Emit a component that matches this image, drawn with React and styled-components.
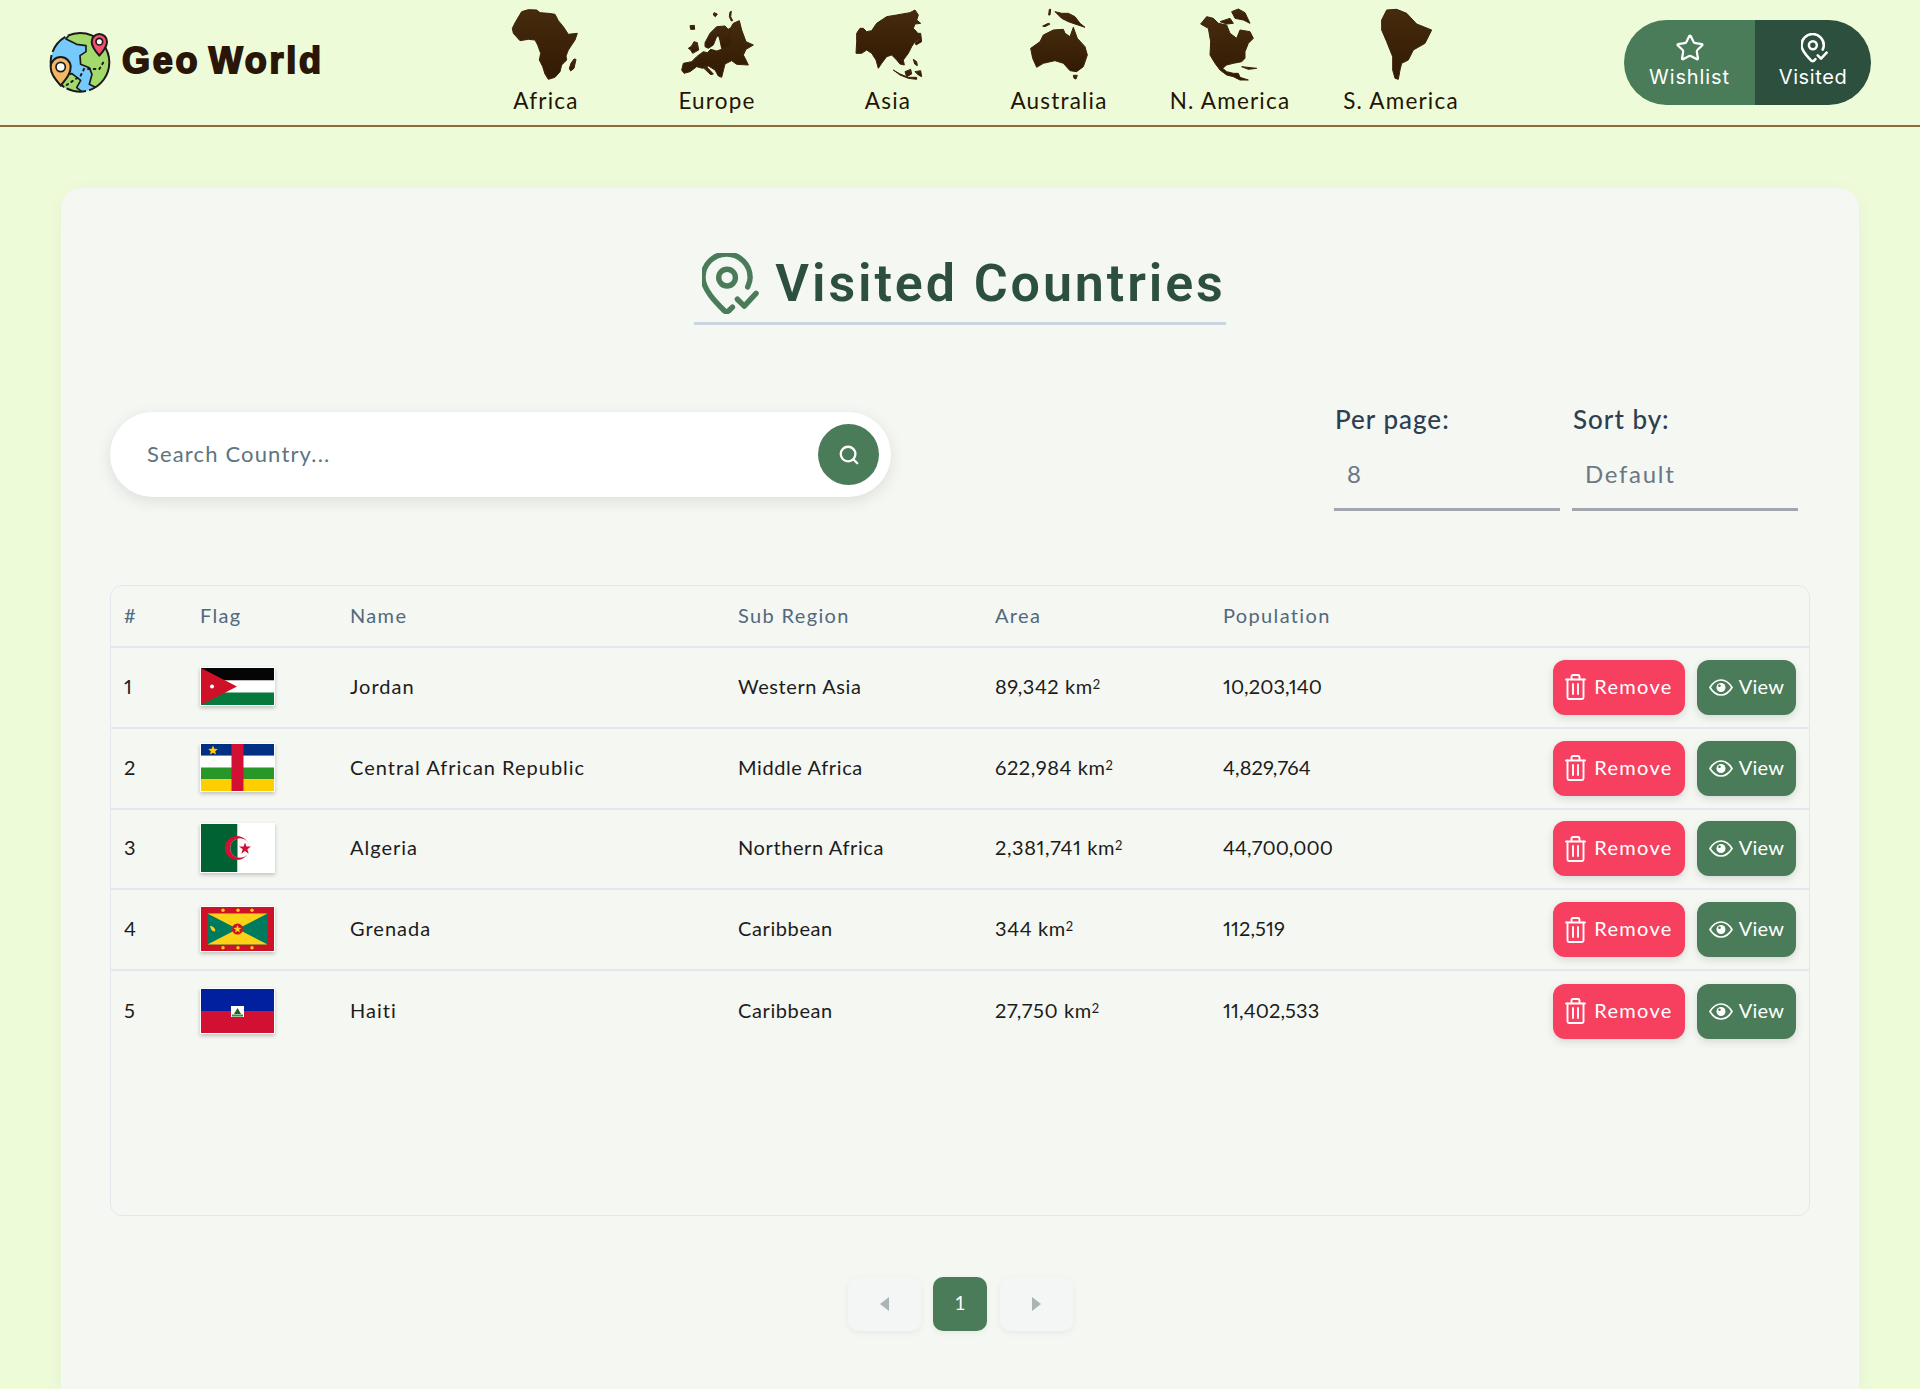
import React from "react";
import styled, { createGlobalStyle } from "styled-components";
import { Star, Search } from "lucide-react";

const Global = createGlobalStyle`
  html, body { margin: 0; padding: 0; height: 100%; overflow: hidden; background: #edfbd9; }
  * { box-sizing: border-box; }
  body { font-family: "Lato", "Noto Sans", sans-serif; color: #1c1c1c; }
`;

const Page = styled.div`height: 1389px; overflow: hidden; background: #edfbd9;`;

const Header = styled.header`
  display: flex; align-items: center; height: 127px; padding: 0 49px 0 40px;
  border-bottom: 2px solid #8c6b3c;
`;
const Brand = styled.a`display: flex; align-items: center; gap: 6px; width: 420.5px; flex: none;`;
const BrandName = styled.span`
  font: 700 36px/1 "Liberation Sans", Arial, sans-serif; color: #2a1608; padding-bottom: 4px;
  letter-spacing: 2.7px; word-spacing: -4px; -webkit-text-stroke: 1.8px #2a1608;
`;
const Nav = styled.nav`display: flex; align-self: flex-start;`;
const NavItem = styled.a`
  width: 171px; display: flex; flex-direction: column; align-items: center;
  font: 400 22.5px/26px "Lato", sans-serif; letter-spacing: 1.2px; color: #241404;
`;
const MapSvg = styled.svg`width: 90px; height: 90px; display: block; margin-bottom: -2px;`;
const Toggle = styled.div`
  margin-left: auto; display: flex; height: 85px; border-radius: 43px; overflow: hidden;
`;
const ToggleBtn = styled.button`
  width: ${p => p.$w}px; border: 0; padding: 12px 0 0; color: #fff;
  background: ${p => (p.$active ? "#2d4f3e" : "#4a7c59")};
  display: flex; flex-direction: column; align-items: center; gap: 1px;
  font: 400 20px/24px "Inter", sans-serif; letter-spacing: ${p => (p.$active ? ".6px" : ".9px")};
`;
const ToggleIcon = styled.span`height: 32px; display: flex; align-items: center; margin-left: ${p => p.$shift || 0}px;`;

const Card = styled.main`
  margin: 61px 61px 0; height: 1300px; padding: 49px; background: #f5f7f2;
  border-radius: 20px; box-shadow: 0 4px 20px rgba(0,0,0,.04);
`;
const TitleRow = styled.div`display: flex; justify-content: center;`;
const Title = styled.h1`
  margin: 0; display: flex; align-items: center; gap: 16px; padding: 16px 0 8px 8px;
  border-bottom: 3px solid #cbd5e1; color: #2d4f3e;
  font: 600 52px/61px "Roboto", sans-serif; letter-spacing: 2.9px;
`;
const Toolbar = styled.div`
  display: flex; justify-content: space-between; align-items: flex-start;
  margin-top: 78px; padding-right: 12px;
`;
const SearchBox = styled.div`
  margin-top: 9px; width: 781px; height: 85px; border-radius: 43px; background: #fff;
  display: flex; align-items: center; justify-content: space-between; padding: 0 12px 0 37px;
  box-shadow: 0 4px 15px rgba(0,0,0,.1);
`;
const Placeholder = styled.span`font: 400 22px/1 "Lato", sans-serif; letter-spacing: 1.15px; color: #5e7480; padding-bottom: 2px;`;
const SearchBtn = styled.button`
  width: 61px; height: 61px; border-radius: 50%; border: 0; padding: 0; background: #4a7c59; color: #fff;
  display: flex; align-items: center; justify-content: center;
`;
const Filters = styled.div`display: flex; gap: 12px;`;
const Filter = styled.div`width: 226px;`;
const FilterLabel = styled.div`
  font: 500 26px/33px "Lato", sans-serif; color: #2d3e50; letter-spacing: 1px; padding-left: 1px;
`;
const FilterValue = styled.div`
  height: 75px; padding: 21px 0 0 13px; border-bottom: 3px solid #a0a6ac;
  font: 400 24px/34px "Lato", sans-serif; color: #6b7785; letter-spacing: 1.7px;
`;
const TableWrap = styled.div`
  margin-top: 74px; height: 631px; border: 1.5px solid #e2e8f0; border-radius: 12px; overflow: hidden;
`;
const Table = styled.table`width: 100%; border-collapse: collapse; table-layout: fixed;`;
const Th = styled.th`
  height: 61px; padding: 0 0 3px 13px; width: ${p => p.$w || "auto"}; text-align: left;
  font: 400 20px/1 "Lato", sans-serif; letter-spacing: 1.35px; color: #52697d;
  border-bottom: 2px solid #e2e8f0;
`;
const Tr = styled.tr``;
const Td = styled.td`
  height: 80.8px; padding: 0 0 ${p => p.$pb ?? 3}px 13px; font: 400 20px/1 "Lato", sans-serif;
  font-variant-numeric: proportional-nums;
  letter-spacing: ${p => p.$ls ?? ".6px"}; color: #1c1c1c;
  border-bottom: 2px solid #e2e8f0;
  ${Tr}:last-child & { border-bottom: 0; }
`;
const Sup = styled.sup`font-size: 13px; line-height: 0; vertical-align: 5px;`;
const FlagFrame = styled.span`
  display: block; width: 75px; line-height: 0; box-shadow: 0 2px 4px rgba(0,0,0,.22); border: 1px solid #fff;
`;
const Actions = styled.div`display: flex; justify-content: flex-end; gap: 12px; padding-right: 13px;`;
const ActionBtn = styled.button`
  height: 55px; width: ${p => p.$w}px; border: 0; border-radius: 12px; padding: 0; color: #fff;
  background: ${p => p.$bg}; display: flex; align-items: center; justify-content: center; gap: ${p => p.$gap}px;
  font: 400 20px/1 "Lato", sans-serif; letter-spacing: ${p => p.$ls};
  box-shadow: 0 3px 8px rgba(0,0,0,.12);
`;
const ActionLabel = styled.span`padding-bottom: 3px;`;
const Pager = styled.div`display: flex; justify-content: center; gap: 12.5px; margin-top: 61px;`;
const PageBtn = styled.button`
  width: ${p => (p.$active ? 54 : 73)}px; height: 54px; border: 0; border-radius: 10px; padding: 0 0 ${p => (p.$active ? 3 : 0)}px;
  display: flex; align-items: center; justify-content: center;
  background: ${p => (p.$active ? "#4a7c59" : "#f4f6f6")}; color: #fff;
  font: 400 19px/1 "Lato", sans-serif;
  box-shadow: 0 2px 6px rgba(0,0,0,.06);
`;

const BROWN = "url(#mapGrad)";
const maps = [
  { name: "Africa", x: 3, d: ["M65 35L85 29L110 30L120 38L145 40L165 43L175 62L190 80L205 103L232 100L225 120L205 150L198 168L200 180L185 195L180 215L165 232L145 238L135 222L128 200L118 180L122 160L113 135L105 120L85 118L60 122L40 100L37 85L47 65Z", "M222 177L228 178L222 205L212 213L208 205L213 190Z"] },
  { name: "Europe", x: 516, d: ["M545 210L550 190L575 185L590 170L610 155L622 158L632 148L650 153L665 148L680 128L685 95L700 70L718 62L725 90L738 125L760 135L738 148L730 165L738 180L745 195L710 193L695 182L675 192L665 232L655 228L645 210L625 198L608 205L590 200L570 215L552 220Z", "M615 128L630 100L650 80L675 78L688 92L670 100L650 110L640 135L625 145L615 140Z", "M655 104L690 85L690 135L665 146L660 122Z", "M582 125L592 128L596 150L578 160L572 150L565 145L575 138Z", "M570 77L583 76L584 88L572 88Z", "M642 38L652 42L646 50L640 45Z", "M690 36L694 34L692 50L698 62L694 63L688 50Z", "M615 195L640 222L632 224L612 205Z"] },
  { name: "Asia", x: 1029, d: ["M1070 100L1080 85L1090 85L1100 95L1115 92L1130 70L1160 50L1190 45L1230 38L1245 30L1255 45L1250 60L1262 70L1245 72L1240 85L1250 95L1260 115L1245 125L1235 140L1225 160L1210 180L1213 195L1200 192L1190 180L1175 165L1160 170L1145 190L1135 205L1128 180L1115 160L1100 150L1085 160L1068 160L1070 125Z", "M1180 210L1200 225L1225 235L1250 238L1250 232L1225 232L1200 222Z", "M1215 215L1232 208L1235 222L1220 230Z", "M1252 100L1262 100L1265 125L1248 135L1246 128L1258 118Z", "M1240 178L1250 185L1252 197L1244 192Z", "M1245 215L1262 212L1265 230L1255 225Z"] },
  { name: "Australia", x: 42, d: ["M92 145L120 125L130 105L160 90L190 88L195 100L210 110L220 82L232 115L255 140L262 165L250 200L230 215L210 212L190 190L165 182L130 190L110 202L98 175Z", "M220 226L232 226L228 237L222 235Z", "M165 35L185 40L205 40L225 50L240 70L255 82L225 72L205 65L185 55Z", "M128 78L145 70L150 72L135 80Z", "M148 28L152 28L150 45L146 45Z"] },
  { name: "N. America", x: 555, d: ["M602 72L620 50L640 55L655 70L680 75L690 100L710 115L720 90L750 95L760 115L745 130L735 155L735 175L725 185L700 190L680 195L668 205L680 215L700 220L715 220L720 232L745 240L720 240L700 230L680 225L660 210L645 190L630 165L632 125L625 85Z", "M695 35L715 27L735 38L750 70L730 60L705 55Z", "M660 65L690 55L700 70L680 72Z", "M725 200L770 205L745 208Z"] },
  { name: "S. America", x: 1068, d: ["M1145 60L1160 30L1190 28L1220 40L1250 72L1295 90L1275 130L1240 150L1225 180L1205 190L1200 210L1195 238L1185 235L1178 210L1178 170L1160 125L1145 90Z"] },
];

const rows = [
  { id: 1, name: "Jordan", sub: "Western Asia", area: "89,342", pop: "10,203,140", Flag: Jordan },
  { id: 2, name: "Central African Republic", sub: "Middle Africa", area: "622,984", pop: "4,829,764", Flag: CAR },
  { id: 3, name: "Algeria", sub: "Northern Africa", area: "2,381,741", pop: "44,700,000", Flag: Algeria },
  { id: 4, name: "Grenada", sub: "Caribbean", area: "344", pop: "112,519", Flag: Grenada },
  { id: 5, name: "Haiti", sub: "Caribbean", area: "27,750", pop: "11,402,533", Flag: Haiti },
];

function Jordan() {
  return <svg width="73" height="37" viewBox="0 0 73 37">
    <rect width="73" height="12.5" fill="#050505" /><rect y="12.5" width="73" height="12" fill="#fff" /><rect y="24.5" width="73" height="12.5" fill="#067a3c" />
    <path d="M0 0L36 18.5L0 37Z" fill="#ce1126" /><circle cx="11" cy="18.5" r="2" fill="#fff" />
  </svg>;
}
function CAR() {
  return <svg width="73" height="47" viewBox="0 0 73 47">
    <rect width="73" height="11.75" fill="#003082" /><rect y="11.75" width="73" height="11.75" fill="#fff" /><rect y="23.5" width="73" height="11.75" fill="#289728" /><rect y="35.25" width="73" height="11.75" fill="#ffce00" />
    <rect x="30.5" width="12" height="47" fill="#d21034" />
    <path d="M12 1.5l1.4 3.2 3.4.3-2.6 2.2.8 3.3-3-1.8-3 1.8.8-3.3-2.6-2.2 3.4-.3z" fill="#ffce00" />
  </svg>;
}
function Algeria() {
  return <svg width="73" height="48" viewBox="0 0 73 48">
    <defs><clipPath id="dzLeft"><rect width="36.5" height="48" /></clipPath></defs>
    <rect width="36.5" height="48" fill="#006233" /><rect x="36.5" width="36.5" height="48" fill="#fff" />
    <circle cx="36" cy="24" r="12" fill="#d21034" />
    <circle cx="39" cy="24" r="9.800" fill="#fff" />
    <circle cx="39" cy="24" r="9.800" fill="#006233" clipPath="url(#dzLeft)" />
    <path d="M44 18.500l1.500 4h4.500l-3.600 2.800 1.300 4.500-3.700-2.700-3.700 2.700 1.400-4.500-3.700-2.800h4.600z" fill="#d21034" />
  </svg>;
}
function Grenada() {
  const stars = [22, 37, 51];
  return <svg width="73" height="44" viewBox="0 0 73 44">
    <rect width="73" height="44" fill="#ce1126" />
    <rect x="6.5" y="6.5" width="60" height="31" fill="#007a5e" />
    <path d="M6.5 6.5H66.5L36.5 22ZM6.5 37.5H66.5L36.5 22Z" fill="#fcd116" />
    <circle cx="36.5" cy="22" r="5.5" fill="#ce1126" />
    <path d="M36.5 18l1 2.8 3 .1-2.4 1.8.9 2.9-2.5-1.7-2.5 1.7.9-2.9-2.4-1.8 3-.1z" fill="#fcd116" />
    <path d="M9 19c3 0 6 2.500 5 5.500-2 0-4-1-5-5.500z" fill="#fcd116" />
    {stars.map(x => <g key={x} fill="#fcd116"><circle cx={x} cy="3.2" r="1.700" /><circle cx={x} cy="40.800" r="1.700" /></g>)}
  </svg>;
}
function Haiti() {
  return <svg width="73" height="44" viewBox="0 0 73 44">
    <rect width="73" height="22" fill="#00209f" /><rect y="22" width="73" height="22" fill="#d21034" />
    <rect x="30" y="17" width="13" height="11" fill="#fff" /><path d="M33 25l3.500-6 3.500 6z" fill="#1f5f2e" /><rect x="31" y="25.500" width="11" height="2" fill="#3b8f3b" />
  </svg>;
}

function VisitedIcon({ width, height, color }) {
  return <svg width={width} height={height} viewBox="0 0 58 62" fill="none" stroke={color} strokeWidth="5.500" strokeLinecap="round" strokeLinejoin="round">
    <path d="M46.500 34.500C48.500 30 49 27 49 25A24 24 0 0 0 1 25C1 37 14 50 22.500 58.500Q25 60.500 27.500 58.500L31 55" />
    <circle cx="25.500" cy="25" r="8.500" />
    <path d="M36 47L43 54L55 41" />
  </svg>;
}
function TrashIcon() {
  return <svg width="21" height="26" viewBox="0 0 21 26" fill="none" stroke="#fff" strokeWidth="1.900" strokeLinecap="round" strokeLinejoin="round">
    <path d="M1 5.500H20M6.500 5.500V2.500Q6.500 1 8 1H13Q14.500 1 14.500 2.500V5.500" />
    <path d="M2.500 5.500V23.500Q2.500 25 4 25H17Q18.500 25 18.500 23.500V5.500" />
    <path d="M8 10V20M13 10V20" />
  </svg>;
}
function EyeIcon() {
  return <svg width="24" height="17" viewBox="0 0 24 17" fill="none">
    <path d="M1 8.500C4 3.500 8 1 12 1S20 3.500 23 8.500C20 13.500 16 16 12 16S4 13.500 1 8.500Z" stroke="#fff" strokeWidth="1.700" />
    <circle cx="12" cy="8.500" r="4.500" fill="#fff" /><circle cx="10.500" cy="6.800" r="1.300" fill="#4a7c59" />
  </svg>;
}
function Caret({ dir }) {
  return <svg width="9" height="14" viewBox="0 0 9 14"><path d={dir === "left" ? "M9 0V14L0 7Z" : "M0 0V14L9 7Z"} fill="#aab4b4" /></svg>;
}
function Logo() {
  return <svg width="76" height="75" viewBox="0 0 228 225">
    <defs><clipPath id="globeClip"><circle cx="120" cy="112" r="88" /></clipPath></defs>
    <circle cx="120" cy="112" r="88" fill="#76c9fb" />
    <g clipPath="url(#globeClip)" stroke="#1a1a1a" strokeWidth="5" strokeLinejoin="round">
      <path d="M78 42L110 58L138 62L138 80L120 92L122 118L148 128L156 148L148 178L172 190L230 150L220 60L150 20L95 20Z" fill="#a4d96b" />
      <path d="M66 152L96 146L122 166L110 188L132 205L90 205L52 170Z" fill="#a4d96b" />
    </g>
    <circle cx="120" cy="112" r="88" fill="none" stroke="#1a1a1a" strokeWidth="6" strokeDasharray="110 10 60 8" />
    <path d="M80 180L122 152L132 132H178L190 112" fill="none" stroke="#1a1a1a" strokeWidth="6" strokeDasharray="5 12" strokeLinecap="round" />
    <path d="M178 92C164 76 155 64 155 50A23 23 0 0 1 201 50C201 64 192 76 178 92Z" fill="#f4516c" stroke="#1a1a1a" strokeWidth="6" strokeLinejoin="round" />
    <circle cx="178" cy="50" r="10" fill="#fff" stroke="#1a1a1a" strokeWidth="5" />
    <path d="M62 182C44 160 32 146 32 126A30 30 0 0 1 92 126C92 146 80 160 62 182Z" fill="#f1b765" stroke="#1a1a1a" strokeWidth="6" strokeLinejoin="round" />
    <circle cx="62" cy="126" r="14" fill="#fff" stroke="#1a1a1a" strokeWidth="5" />
  </svg>;
}

export default function App() {
  return (
    <Page>
      <Global />
      <svg width="0" height="0" style={{ position: "absolute" }}>
        <defs>
          <linearGradient id="mapGrad" x1="0" y1="0" x2="0" y2="1">
            <stop offset="0" stopColor="#462b0d" /><stop offset="1" stopColor="#311a03" />
          </linearGradient>
        </defs>
      </svg>
      <Header>
        <Brand><Logo /><BrandName>Geo World</BrandName></Brand>
        <Nav>
          {maps.map(m => (
            <NavItem key={m.name}>
              <MapSvg viewBox={`${m.x} 0 270 270`}>
                {m.d.map((d, i) => <path key={i} d={d} fill={BROWN} stroke="#3b2208" strokeWidth="3" strokeLinejoin="round" />)}
              </MapSvg>
              {m.name}
            </NavItem>
          ))}
        </Nav>
        <Toggle>
          <ToggleBtn $w={131}><ToggleIcon><Star size={30} strokeWidth={1.8} /></ToggleIcon>Wishlist</ToggleBtn>
          <ToggleBtn $w={116} $active><ToggleIcon $shift={3}><VisitedIcon width={27} height={30} color="#fff" /></ToggleIcon>Visited</ToggleBtn>
        </Toggle>
      </Header>
      <Card>
        <TitleRow>
          <Title><VisitedIcon width={57} height={61} color="#4a7c59" />Visited Countries</Title>
        </TitleRow>
        <Toolbar>
          <SearchBox>
            <Placeholder>Search Country...</Placeholder>
            <SearchBtn><Search size={22} strokeWidth={2.5} /></SearchBtn>
          </SearchBox>
          <Filters>
            <Filter><FilterLabel>Per page:</FilterLabel><FilterValue>8</FilterValue></Filter>
            <Filter><FilterLabel>Sort by:</FilterLabel><FilterValue>Default</FilterValue></Filter>
          </Filters>
        </Toolbar>
        <TableWrap>
          <Table>
            <thead>
              <tr>
                <Th $w="76px">#</Th><Th $w="150px">Flag</Th><Th $w="388px">Name</Th><Th $w="257px">Sub Region</Th><Th $w="228px">Area</Th><Th $w="200px">Population</Th><Th />
              </tr>
            </thead>
            <tbody>
              {rows.map(r => (
                <Tr key={r.id}>
                  <Td>{r.id}</Td>
                  <Td $pb={1}><FlagFrame><r.Flag /></FlagFrame></Td>
                  <Td $ls="1px">{r.name}</Td>
                  <Td>{r.sub}</Td>
                  <Td $ls=".6px">{r.area} km<Sup>2</Sup></Td>
                  <Td $ls=".1px">{r.pop}</Td>
                  <Td $pb={0}>
                    <Actions>
                      <ActionBtn $w={132} $bg="#f73f60" $gap={8} $ls="1.3px"><TrashIcon /><ActionLabel>Remove</ActionLabel></ActionBtn>
                      <ActionBtn $w={99} $bg="#4a7c59" $gap={6} $ls=".3px"><EyeIcon /><ActionLabel>View</ActionLabel></ActionBtn>
                    </Actions>
                  </Td>
                </Tr>
              ))}
            </tbody>
          </Table>
        </TableWrap>
        <Pager>
          <PageBtn><Caret dir="left" /></PageBtn>
          <PageBtn $active>1</PageBtn>
          <PageBtn><Caret dir="right" /></PageBtn>
        </Pager>
      </Card>
    </Page>
  );
}
